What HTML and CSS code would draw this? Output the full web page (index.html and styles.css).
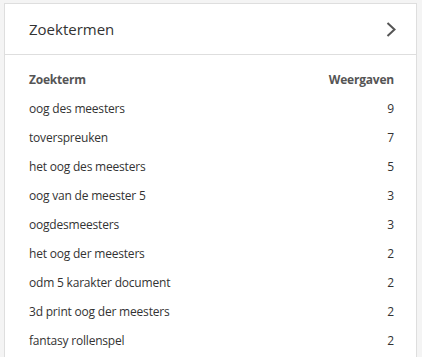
FILE: index.html
```html
<!DOCTYPE html>
<html lang="nl">
<head>
    <meta charset="UTF-8">
    <meta name="viewport" content="width=device-width, initial-scale=1.0">
    <title>Zoektermen</title>
    <link rel="stylesheet" href="styles.css">
</head>
<body>
    <section class="card">
        <header class="card-head">
            <h1 class="card-title">Zoektermen</h1>
            <svg class="chevron" width="10" height="15" viewBox="0 0 10 15">
                <path d="M1.5 1 L8.5 7.5 L1.5 14" fill="none" stroke="#555" stroke-width="2"/>
            </svg>
        </header>
        <table class="terms">
            <thead>
                <tr><th>Zoekterm</th><th class="num">Weergaven</th></tr>
            </thead>
            <tbody>
                <tr><td>oog des meesters</td><td class="num">9</td></tr>
                <tr><td>toverspreuken</td><td class="num">7</td></tr>
                <tr><td>het oog des meesters</td><td class="num">5</td></tr>
                <tr><td>oog van de meester 5</td><td class="num">3</td></tr>
                <tr><td>oogdesmeesters</td><td class="num">3</td></tr>
                <tr><td>het oog der meesters</td><td class="num">2</td></tr>
                <tr><td>odm 5 karakter document</td><td class="num">2</td></tr>
                <tr><td>3d print oog der meesters</td><td class="num">2</td></tr>
                <tr><td>fantasy rollenspel</td><td class="num">2</td></tr>
            </tbody>
        </table>
    </section>
</body>
</html>
```

FILE: styles.css
```css
body {
  margin: 0;
  padding: 3px 5px 0 4px;
  background: #f4f4f4;
  font-family: "Open Sans", "Noto Sans", sans-serif;
  color: #333;
}
.card {
  background: #fff;
  border: 1px solid #dedede;
  border-bottom: none;
  height: 360px;
}
.card-head {
  display: flex;
  align-items: center;
  justify-content: space-between;
  height: 50px;
  padding: 0 20px 0 24px;
  border-bottom: 1px solid #dedede;
}
.card-title {
  margin: 0;
  font-size: 15px;
  font-weight: normal;
  color: #333;
}
.chevron {
  display: block;
}
.terms {
  width: calc(100% - 46px);
  margin: 10px 22px 0 24px;
  border-collapse: collapse;
  font-size: 12px;
  letter-spacing: -0.2px;
}
.terms th,
.terms td {
  height: 29px;
  padding: 0;
  text-align: left;
  vertical-align: middle;
}
.terms th {
  font-weight: bold;
  color: #555;
}
.terms .num {
  text-align: right;
}
```
